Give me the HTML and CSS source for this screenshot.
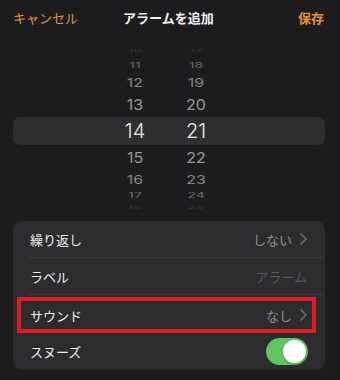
FILE: index.html
```html
<!DOCTYPE html>
<html lang="ja">
<head>
<meta charset="utf-8">
<link rel="stylesheet" href="styles.css">
</head>
<body>
<div class="screen">
  <header class="nav">
    <span class="nav-btn">キャンセル</span>
    <span class="nav-title">アラームを追加</span>
    <span class="nav-btn nav-save">保存</span>
  </header>

  <div class="picker">
    <div class="prow r-edge"><span class="cell">10</span><span class="cell">17</span></div>
    <div class="prow r3"><span class="cell">11</span><span class="cell">18</span></div>
    <div class="prow r2"><span class="cell">12</span><span class="cell">19</span></div>
    <div class="prow r1"><span class="cell">13</span><span class="cell">20</span></div>
    <div class="prow r0"><span class="cell">14</span><span class="cell">21</span></div>
    <div class="prow r1b"><span class="cell">15</span><span class="cell">22</span></div>
    <div class="prow r2b"><span class="cell">16</span><span class="cell">23</span></div>
    <div class="prow r3b"><span class="cell">17</span><span class="cell">24</span></div>
    <div class="prow r-edgeb"><span class="cell">18</span><span class="cell">25</span></div>
  </div>

  <div class="card">
    <div class="row">
      <div class="row-inner">
        <span class="label">繰り返し</span>
        <span class="value">しない</span>
        <svg class="chev" width="7" height="12" viewBox="0 0 7 12"><path d="M1 1l5 5-5 5" fill="none" stroke="#6e6e73" stroke-width="1.6" stroke-linecap="round" stroke-linejoin="round"/></svg>
      </div>
    </div>
    <div class="row">
      <div class="row-inner">
        <span class="label">ラベル</span>
        <span class="value placeholder">アラーム</span>
      </div>
    </div>
    <div class="row row-sound">
      <div class="highlight">
        <span class="label">サウンド</span>
        <span class="value">なし</span>
        <svg class="chev" width="7" height="12" viewBox="0 0 7 12"><path d="M1 1l5 5-5 5" fill="none" stroke="#6e6e73" stroke-width="1.6" stroke-linecap="round" stroke-linejoin="round"/></svg>
      </div>
    </div>
    <div class="row">
      <div class="row-inner last">
        <span class="label">スヌーズ</span>
        <span class="toggle"><span class="knob"></span></span>
      </div>
    </div>
  </div>
</div>
</body>
</html>
```

FILE: styles.css
```css
* { box-sizing: border-box; }
html, body {
  margin: 0;
  padding: 0;
  background: #1c1c1e;
}
.screen {
  width: 340px;
  height: 380px;
  overflow: hidden;
  background: #1c1c1e;
  font-family: "Noto Sans CJK JP", "Noto Sans", sans-serif;
  color: #ececee;
}
.nav {
  height: 35px;
  display: flex;
  align-items: center;
  padding: 0 16px 0 13px;
  font-size: 13px;
}
.nav-btn { color: #e3923a; }
.nav-save { font-weight: 700; margin-left: auto; }
.nav-title {
  font-weight: 700;
  color: #f2f2f4;
  margin-left: 45px;
}

.picker {
  margin-top: 13px;
  height: 161px;
  overflow: hidden;
  display: flex;
  flex-direction: column;
  font-family: Inter, "Liberation Sans", sans-serif;
}
.prow {
  display: flex;
  align-items: center;
  gap: 21px;
  padding-left: 102px;
  margin: 0 15px 0 13px;
}
.cell {
  width: 40px;
  text-align: center;
  line-height: 1;
  display: block;
}
.r-edge { height: 9px; align-items: flex-end; }
.r-edge .cell { font-size: 13px; transform: scaleY(0.25); color: #3c3c40; }
.r3 { height: 16px; }
.r3 .cell { font-size: 14px; transform: scaleY(0.55); color: #6a6a6e; }
.r2 { height: 18px; }
.r2 .cell { font-size: 16px; transform: scaleY(0.75); color: #86868a; }
.r1 { height: 26px; }
.r1 .cell { font-size: 16px; transform: scaleY(0.93); color: #98989c; }
.r0 {
  height: 28px;
  background: #2e2e31;
  border-radius: 7px;
}
.r0 .cell { font-size: 20px; font-weight: 300; color: #ececee; }
.r1b { height: 24px; }
.r1b .cell { font-size: 16px; transform: scaleY(0.93); color: #98989c; }
.r2b { height: 20px; }
.r2b .cell { font-size: 16px; transform: scaleY(0.75); color: #86868a; }
.r3b { height: 12px; }
.r3b .cell { font-size: 14px; transform: scaleY(0.5); color: #6a6a6e; }
.r-edgeb { height: 8px; align-items: flex-start; }
.r-edgeb .cell { font-size: 13px; transform: scaleY(0.25); color: #3c3c40; }

.card {
  margin: 12px 15px 0 13px;
  background: #2c2c2e;
  border-radius: 9px;
  font-size: 13px;
  overflow: hidden;
}
.row { padding-left: 15px; }
.row-inner {
  height: 37px;
  display: flex;
  align-items: center;
  padding: 0 18px 0 2px;
  border-bottom: 1px solid #3a3a3d;
}
.row-inner.last { border-bottom: none; }
.label { flex: 1; color: #ececee; }
.value { color: #8e8e93; }
.placeholder { color: #5b5b60; }
.chev { margin-left: 8px; display: block; }

.row-sound {
  padding: 2px 9px 0 4px;
}
.highlight {
  height: 36px;
  border: 4px solid #e01c26;
  display: flex;
  align-items: center;
  padding: 0 5px 0 9px;
}

.toggle {
  width: 42px;
  height: 27px;
  border-radius: 14px;
  background: #62c365;
  display: flex;
  align-items: center;
  justify-content: flex-end;
  padding-right: 2px;
  margin-right: -1px;
}
.knob {
  width: 23px;
  height: 23px;
  border-radius: 50%;
  background: #ffffff;
  box-shadow: 0 1px 2px rgba(0,0,0,0.25);
}
```
